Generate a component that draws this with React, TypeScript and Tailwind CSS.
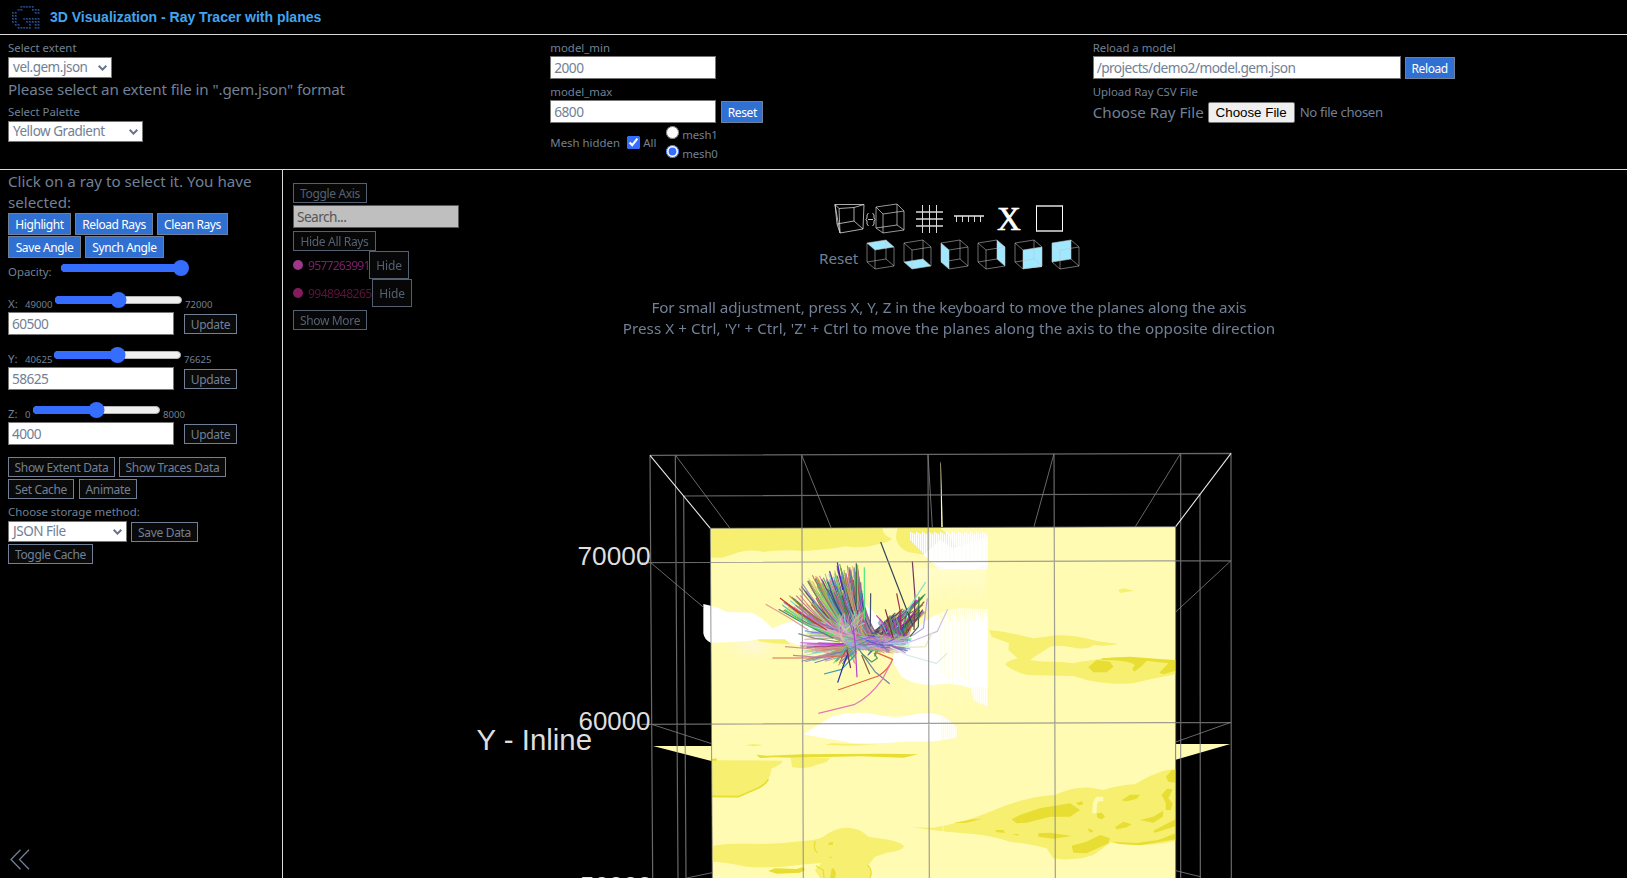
import React from "react";

const ff = "font-['Noto_Sans',sans-serif]";
const darkBtn =
  "box-border h-5 shrink-0 whitespace-nowrap border border-[#718096] bg-[#0a0a0a] text-center text-[12px] leading-[20px] tracking-[-0.33px] text-[#718096]";
const hideBtn =
  "box-border h-7 w-10 border border-[#718096] bg-[#0a0a0a] text-[12px] leading-[28px] tracking-[-0.1px] text-[#718096]";
const blueBtn =
  "box-border h-[22px] shrink-0 whitespace-nowrap border border-[#718096] bg-[#3070d3] text-center text-[12px] leading-[21px] tracking-[-0.4px] text-white";
const field =
  "box-border h-[23px] border border-[#767676] bg-white px-[3px] text-[13.7px] leading-[21px] tracking-[-0.56px] text-[#718096] outline-none";
const label = "block text-[11.4px] leading-4";

function Select({ value, className }: { value: string; className: string }) {
  return (
    <button type="button" className={`box-border flex h-[21px] items-center justify-between border border-[#767676] bg-white pl-1 pr-1 text-[13.5px] leading-[19px] tracking-[-0.48px] text-[#718096] ${className}`}>
      <span className="whitespace-nowrap">{value}</span>
      <svg width="9" height="6" viewBox="0 0 9 6" fill="none" stroke="#64748b" strokeWidth="2">
        <path d="M.7.8 4.5 4.6 8.3.8" />
      </svg>
    </button>
  );
}

const LOGO = [
  "...XXXXX..",
  "..XX...XXX",
  "XX......XX",
  "XX........",
  "XX..XXXXXX",
  "XX...XXXXX",
  ".XX...X.XX",
  "..XXXXX.XX",
];

function Logo() {
  return (
    <svg width="29" height="24" viewBox="0 0 29 24" className="shrink-0">
      {LOGO.map((row, y) =>
        row.split("").map((c, x) =>
          c === "X" ? (
            <g key={`${x}-${y}`}>
              <rect x={x * 2.85} y={y * 3} width="2" height="2" fill="#142f60" />
              <rect x={x * 2.85} y={y * 3} width="1" height="1" fill="#2d5592" />
            </g>
          ) : null,
        ),
      )}
    </svg>
  );
}

function Slider({ value, className }: { value: number; className: string }) {
  const left = 8 + (value / 100) * 113;
  return (
    <svg width="129" height="16" viewBox="0 0 129 16" className={`shrink-0 ${className}`}>
      <rect x="1.5" y="4.5" width="126" height="7" rx="3.5" fill="#efefef" stroke="#b2b2b2" />
      <rect x="1" y="4" width={left} height="8" rx="4" fill="#356dff" />
      <circle cx={left} cy="8" r="8" fill="#356dff" />
    </svg>
  );
}

function Axis(p: { name: string; min: string; max: string; value: string; minW: string }) {
  return (
    <div className="h-[55px]">
      <div className="flex h-[20px] items-start">
        <span className="w-[17px] text-[11.4px] leading-4">{p.name}:</span>
        <span className={`text-[9.6px] leading-[17px] ${p.minW}`}>{p.min}</span>
        <Slider value={50} className="-mt-1" />
        <span className="pl-[2px] text-[9.6px] leading-[17px]">{p.max}</span>
      </div>
      <div className="-mt-[4px] flex items-center">
        <input className={`${field} w-[166px]`} defaultValue={p.value} />
        <button className={`${darkBtn} ml-[10px] mt-px w-[53px]`}>Update</button>
      </div>
    </div>
  );
}

/* ---------- toolbar icons ---------- */

const FACES: Record<string, string> = {
  top: "M1 4 20 1 28 8 9 11Z",
  bottom: "M1 23 20 20 28 27 9 30Z",
  left: "M1 4 9 11 9 30 1 23Z",
  right: "M20 1 28 8 28 27 20 20Z",
  front: "M9 11 28 8 28 28 9 30Z",
  back: "M1 4 20 1 20 20 1 23Z",
};

function Cube({ face }: { face: string }) {
  return (
    <svg width="29" height="32" viewBox="0 0 29 32" fill="none" className="mr-2 shrink-0">
      <path d={FACES[face]} fill="#9fe8ff" />
      <path d="M1 4 20 1 28 8 9 11ZM1 4V23L9 30 28 27V8M9 11V30M20 1V20M1 23 20 20 28 27" stroke="#c4c4c4" strokeOpacity=".55" strokeWidth="1" />
    </svg>
  );
}

function Projection() {
  return (
    <svg width="72" height="32" viewBox="0 0 72 32" fill="none" stroke="#d5d5d5" strokeWidth="1">
      <path d="M1 1.500H30L29 26 6 30ZM1 1.500 5 5.500 20 4.500 30 1.500M5 5.500 6 30M20 4.500V18L29 26M20 18 3 21M1 1.500 3 21 6 30" strokeOpacity=".8" />
      <path d="M34.500 10 33 12V15L32 16.500 33 18V21L34.500 23M38.500 10 40 12V15L41 16.500 40 18V21L38.500 23M34 16.500H39" strokeOpacity=".9" />
      <path d="M42 4 63 1 70 8 49 11ZM42 4V25L49 30 70 27V8M49 11V30M63 1V22L42 25M63 22 70 27" strokeOpacity=".7" />
    </svg>
  );
}

/* ---------- scene ---------- */

function makeRandom(seed: number) {
  let s = seed;
  return () => {
    s = (s * 1664525 + 1013904223) % 4294967296;
    return s / 4294967296;
  };
}

type Ray = { d: string; c: string; o: number };

function buildRays(): Ray[] {
  const r = makeRandom(41);
  const out: Ray[] = [];
  const color = (lo: number, hi: number) =>
    `hsl(${Math.floor(r() * 360)} ${Math.floor(30 + r() * 50)}% ${Math.floor(lo + r() * (hi - lo))}%)`;
  const n = (v: number) => v.toFixed(0);
  const tips = [[120, 236], [130, 210], [160, 178], [198, 150], [216, 134], [245, 136], [270, 120], [293, 100], [316, 106], [334, 108], [352, 104]];
  for (let i = 0; i < 230; i++) {
    const t = Math.pow(r(), 0.9) * (tips.length - 1);
    const k = Math.min(tips.length - 2, Math.floor(t));
    const f = t - k;
    const shrink = Math.pow(r(), 1.2) * 0.42;
    const tx = tips[k][0] * (1 - f) + tips[k + 1][0] * f;
    const ty = tips[k][1] * (1 - f) + tips[k + 1][1] * f;
    const ex = 325 + (t / 10) * 72 + r() * 24 - 12;
    const ey = 335 - (t / 10) * 22 + r() * 20 - 10;
    const sx = tx + (ex - tx) * shrink;
    const sy = ty + (ey - ty) * shrink;
    const mx = sx * 0.4 + ex * 0.6 - 18;
    const my = sy * 0.34 + ey * 0.66 + 4;
    out.push({ d: `M${n(sx)} ${n(sy)}Q${n(mx)} ${n(my)} ${n(ex)} ${n(ey)}`, c: color(28, 68), o: 0.75 });
  }
  for (let i = 0; i < 110; i++) {
    const u = r();
    const sx = 430 + u * 128;
    const sy = 272 - u * 82 + r() * 60;
    out.push({ d: `M${n(sx)} ${n(sy)}L${n(sx - 25 - r() * 30)} ${n(sy + 28 + r() * 25)} ${n(400 + u * 85 + r() * 24)} ${n(300 + r() * 45)}`, c: color(24, 56), o: 0.75 });
  }
  for (let i = 0; i < 26; i++) {
    const sx = 410 + r() * 70;
    out.push({ d: `M${n(sx)} ${n(255 + r() * 40)}L${n(sx + 14 + r() * 16)} ${n(318 + r() * 16)}`, c: color(32, 66), o: 0.75 });
  }
  for (let i = 0; i < 120; i++) {
    const sx = 190 + r() * 185;
    const ex = 310 + r() * 85;
    out.push({ d: `M${n(sx)} ${n(235 + (370 - sx) * 0.25 + r() * 55)}Q${n(ex - 34)} ${n(302 + r() * 22)} ${n(ex)} ${n(322 + r() * 22)}`, c: color(58, 80), o: 0.65 });
  }
  for (let i = 0; i < 65; i++) {
    const sx = 180 + r() * 110;
    const sy = 335 + r() * 65;
    out.push({ d: `M${n(sx)} ${n(sy)}L${n(sx + 60)} ${n(sy * 0.65 + 121)} ${n(325 + r() * 40)} ${n(335 + r() * 20)}`, c: color(48, 78), o: 0.65 });
  }
  for (let i = 0; i < 170; i++) {
    const sx = 310 + r() * 90;
    const ex = 410 + r() * 105;
    out.push({ d: `M${n(sx)} ${n(312 + r() * 50)}L${n((sx + ex) / 2)} ${n(318 + r() * 42)} ${n(ex)} ${n(312 + r() * 58)}`, c: color(50, 76), o: 0.65 });
  }
  for (let i = 0; i < 22; i++) {
    const sx = 270 + r() * 80;
    out.push({ d: `M${n(sx)} ${n(375 + r() * 32)}L${n(315 + r() * 35)} ${n(350 + r() * 20)}`, c: color(40, 65), o: 0.7 });
  }
  return out;
}

const RAYS = buildRays();

const LONG_RAYS: [string, string][] = [
  ["M422 36 492 218 520 290", "#35485c"],
  ["M517 94 525 200 522 300", "#783854"],
  ["M373 112V270", "#4be87d"],
  ["M353 104V240", "#d4a53c"],
  ["M349 100V220", "#38773a"],
  ["M392 190 391 290", "#44526f"],
  ["M292 97 308 180", "#5221c9"],
  ["M77 223 150 265 205 300", "#dfa08d"],
  ["M120 204 180 250 260 300", "#cc3b24"],
  ["M116 238 190 280 280 325", "#38857c"],
  ["M136 240 200 285 280 315", "#54dd60"],
  ["M175 311 225 325 300 336", "#869080"],
  ["M97 384H210L320 377", "#d66e50"],
  ["M135 350 220 357 310 352", "#dc918e"],
  ["M159 376 225 381 300 375", "#cf7e9c"],
  ["M252 432 305 418 345 375", "#3d9dad"],
  ["M293 458 309 410 322 375", "#1b2fb0"],
  ["M351 442 346 350 340 290", "#b93dc9"],
  ["M332 414 320 360", "#62385a"],
  ["M389 432 365 375", "#856244"],
  ["M449 461 405 425 355 355", "#7085a3"],
  ["M294 480 415 438Q445 420 458 388L410 368", "#df6340"],
  ["M235 550 342 524Q390 500 427 448L456 394", "#e277ba"],
  ["M365 370 395 396 412 385 402 369", "#4d9a5f"],
  ["M623 238 592 304 510 336 430 342", "#cfbfe8"],
  ["M578 305 556 350 510 352 460 345", "#e9e8b5"],
  ["M621 370 589 400 500 375 450 350", "#d6e9e8"],
  ["M562 205 550 295 520 315 440 340", "#b9a4de"],
  ["M557 156 500 245", "#79ded0"],
  ["M470 190 480 240 482 300", "#a32e52"],
  ["M409 256 440 290 455 325", "#c13bbb"],
  ["M436 238 460 325", "#7a3040"],
  ["M537 200 535 290 510 320", "#3d6651"],
];

const L = "#fffbb3";
const M = "#f6ef6f";
const D = "#e7dd33";

const stripes = (x0: number, x1: number, step: number, top: (i: number) => number, bottom: (i: number) => number) => {
  let d = "";
  let i = 0;
  for (let x = x0; x < x1; x += step) {
    d += `M${x} ${top(i)}V${bottom(i)}`;
    i++;
  }
  return d;
};

function Scene() {
  return (
    <svg className="absolute inset-0 h-full w-full" viewBox="283 170 1344 708" fill="none">
      <defs>
        <linearGradient id="fade" x1="0" y1="0" x2="0" y2="1">
          <stop offset="0" stopColor="#fff" stopOpacity=".75" />
          <stop offset="1" stopColor="#fff" stopOpacity="0" />
        </linearGradient>
        <radialGradient id="glow">
          <stop offset="0" stopColor="#fff8d8" />
          <stop offset="1" stopColor="#fffbb3" stopOpacity="0" />
        </radialGradient>
      </defs>
      <g transform="translate(460 440) scale(.333333)">
        {/* section plane */}
        <path d="M751 265 2147 260V1314H757Z" fill={L} />
        <path d="M579 918H757V964ZM2147 912H2311L2147 959Z" fill={L} />
        <path d="M751 265H1267Q1270 288 1296 296 1285 307 1258 311 1210 327 1155 319L1125 325Q1050 332 1035 333 960 328 910 336 860 325 820 343L785 353H753Z" fill={M} />
        <path d="M1312 264H1440L1465 285 1490 320 1400 345 1343 336Q1308 318 1308 290Z" fill={M} />
        {/* low amplitude bodies */}
        <ellipse cx="880" cy="620" rx="110" ry="56" fill="url(#glow)" />
        <path d="M730 492Q770 500 800 516L875 518Q905 530 937 565 970 550 990 545L1060 535 1120 610 1010 615 975 600 895 598Q850 608 752 608 733 600 730 580Z" fill="#fff" />
        <path d="M895 598H975L990 612Q940 612 895 603Z" fill={M} />
        <path d="M1195 485Q1240 500 1265 550L1290 600H1200ZM1295 660 1320 600 1400 540Q1460 505 1500 505L1583 508V800L1540 780 1535 745Q1480 725 1420 735 1360 735 1325 710Z" fill="#fff" />
        <path d="M1030 883Q1080 850 1120 827 1180 812 1240 822 1300 838 1350 826 1420 810 1460 835L1490 860V893Q1420 908 1330 905 1250 912 1180 909 1090 895 1030 883Z" fill="#fff" />
        <path d="M1440 300 1480 325 1583 290V375L1540 389 1460 386 1415 365 1390 345Z" fill="#fff" />
        <path d={stripes(1352, 1584, 6, (i) => 276 + (i % 3) * 3, (i) => Math.min(388, 302 + i * 6))} stroke="#fff" strokeWidth="3.800" />
        <path d={stripes(1397, 1584, 12, (i) => 280 + (i % 3) * 4, (i) => 345 + (i % 4) * 9)} stroke={L} strokeWidth="1.600" strokeOpacity=".7" />
        <rect x="1350" y="385" width="228" height="118" fill="url(#fade)" opacity=".35" />
        <path d={stripes(1360, 1584, 6, () => 385, (i) => 430 + (i % 5) * 16)} stroke="#fff" strokeWidth="1.500" strokeOpacity=".38" />
        <path d={stripes(1430, 1584, 6, (i) => 500 + (i % 3) * 3, (i) => 520 + (i % 4) * 8)} stroke={L} strokeWidth="2" strokeOpacity=".9" />
        <path d={stripes(1442, 1530, 12, () => 515, (i) => 700 + (i % 4) * 10)} stroke={L} strokeWidth="1.500" strokeOpacity=".75" />
        <path d={stripes(1535, 1584, 6, () => 742, (i) => 775 + i * 4)} stroke={L} strokeWidth="2" />
        <path d={stripes(1330, 1580, 6, () => 735, (i) => 768 + (i % 5) * 12)} stroke="#fff" strokeWidth="2" strokeOpacity=".4" />
        <path d={stripes(1445, 1496, 6, () => 820, () => 908)} stroke={L} strokeWidth="2" />
        {/* middle strata */}
        <path d="M1587 570Q1640 575 1700 590L1720 595 1790 586Q1850 585 1910 603L1975 612Q1940 620 1900 615 1890 628 1850 625 1780 605 1710 660 1750 668 1860 665L1970 651 2147 660V703Q2080 715 2020 730 1950 735 1880 720L1840 708 1700 705Q1650 690 1635 672 1650 660 1673 655L1645 630 1647 610 1595 590Z" fill={M} />
        <path d="M1715 658 1770 620Q1810 612 1850 628L1905 625Q1925 645 1900 655L1840 670Q1780 662 1715 658Z" fill={L} />
        <path d="M1885 682 1910 660 1950 665 1960 680 1940 697H1900ZM1925 655 2010 650 2147 661V692L2110 703 2098 698 2125 670 2060 662Q2045 680 2025 694 2010 690 2025 676 2010 660 1925 660Z" fill={D} />
        <path d="M1975 449 1990 445 2022 452 1980 459Z" fill={M} />
        <path d="M857 916 880 912 910 916 880 919ZM1095 915 1115 910 1250 914 1170 917Z" fill={M} />
        <path d="M889 944 920 947 1030 943 1270 941 1375 943 1330 953 1200 949 1000 953 940 952 900 954Z" fill={D} />
        <path d="M992 955 1110 953 1100 966 1070 974Q1040 988 997 982Z" fill={M} />
        <path d="M757 961 968 962Q965 975 935 985 930 1030 890 1048L835 1072H757Z" fill={M} />
        <path d="M925 1018Q915 1036 890 1046L835 1070 757 1069" stroke={D} strokeWidth="5" />
        <path d="M755 957 770 955V962H755Z" fill={D} />
        <path d="M757 1218Q820 1208 900 1212 980 1210 1060 1200 1080 1195 1090 1190 1130 1160 1170 1164 1205 1168 1225 1190L1290 1200Q1330 1210 1332 1220 1325 1232 1280 1238L1245 1250 1225 1275Q1240 1300 1230 1314H1080L1065 1290 1085 1268Q1060 1270 1015 1275 950 1285 860 1280 800 1266 757 1265Z" fill={M} />
        <path d="M925 1293 945 1285 1010 1287 1030 1281 1035 1290 1020 1298 950 1301ZM1105 1209 1118 1206 1119 1214 1107 1215ZM1105 1250H1115L1114 1255ZM1115 1288 1120 1284 1128 1298 1125 1314H1110Z" fill={D} />
        <path d="M1066 1203Q1058 1230 1073 1238M1068 1278 1090 1290 1092 1314M1222 1275Q1240 1290 1230 1314" stroke={D} strokeWidth="3.500" />
        <path d="M1354 1162 1420 1163Q1520 1145 1590 1115 1700 1068 1785 1065 1840 1040 1890 1043L1930 1050Q1980 1035 2025 1033 2075 1002 2120 990L2147 988V1202Q2090 1215 2040 1215 1980 1215 1955 1205L1900 1245 1865 1255Q1810 1262 1780 1255L1760 1225Q1700 1210 1650 1205 1600 1188 1540 1182L1460 1175Z" fill={M} />
        <path d="M1480 1149 1540 1138 1565 1136 1520 1148ZM1655 1138 1680 1125 1740 1105 1830 1090 1860 1110 1830 1130 1770 1130 1700 1148 1670 1150ZM1735 1180 1770 1178 1835 1188 1780 1196 1735 1190ZM1835 1217 1880 1205 1920 1185 1950 1195 1945 1210 1880 1240 1840 1238ZM1605 1170 1630 1170 1635 1179 1610 1176ZM1655 1182H1675V1187ZM1885 1165 1900 1172 1895 1178 1885 1172ZM1848 1088 1868 1084V1094L1855 1096ZM1910 1120 1925 1118 1935 1130 1925 1138 1912 1133ZM1965 1162 1990 1145 2015 1153 2000 1162 1970 1168ZM1985 1081 2010 1064 2040 1064 2030 1076 2000 1084ZM2040 1140 2080 1130 2110 1112 2108 1130 2080 1148ZM2105 1065 2120 1047 2138 1048 2125 1075 2138 1090 2133 1110 2118 1110 2117 1088ZM2118 1010 2135 990 2147 990V1028L2125 1025ZM1950 1205 2030 1209 2095 1200 2147 1180V1198L2040 1216 1980 1212ZM2080 1172 2147 1138V1158L2085 1178Z" fill={D} />
        <path d="M1903 1120 1905 1090 1912 1077 1930 1077" stroke={L} strokeWidth="13" />
        <path d="M1449 1155V1225" stroke={L} strokeWidth="3" />
      </g>
      <path d="M940.400 461 941.200 527H942.800L941 464Z" fill={L} />

      {/* ray bundle */}
      <g transform="translate(740 530) scale(.333333)" strokeWidth="3.300" strokeLinejoin="round">
        {RAYS.map((ray, i) => (
          <path key={i} d={ray.d} stroke={ray.c} strokeOpacity={ray.o} />
        ))}
        {LONG_RAYS.map(([d, c]) => (
          <path key={d} d={d} stroke={c} strokeWidth="3.600" />
        ))}
      </g>

      {/* bounding cage */}
      <g transform="translate(460 440) scale(.333333)" stroke="#858585" strokeOpacity=".78" strokeWidth="3.600">
        <path d="M570 46 2313 40 2314 1314M570 46 578 1314M646 45 654 1314M671 168 678 1314M1025 45 1030 1314M1404 42 1408 1314M1782 41 1786 1314M2162 40V1314M2220 162 2221 1314M671 168 2220 162M545 368 2313 362M545 853 2313 847" />
        <path d="M646 45 810 265M1025 45 1114 265M1404 42 1417 262M1782 41 1722 260M2162 40 2026 260M572 368 732 503M2313 362 2147 516M575 853 755 911M2313 847 2147 906M680 1314 757 1298M2147 1292 2221 1310" strokeWidth="3" />
        <path d="M570 46 751 265M2313 40 2147 260" stroke="#fff" strokeOpacity=".9" strokeWidth="3.300" />
        <path d="M751 265 757 1314M751 265 2147 260V1314" strokeWidth="3" stroke="#777" />
      </g>
      <g fill="#dedede" fontFamily="'Liberation Sans', sans-serif">
        <text x="577.500" y="564.500" fontSize="25.500" textLength="73" lengthAdjust="spacingAndGlyphs">70000</text>
        <text x="578.500" y="730" fontSize="25.500" textLength="72" lengthAdjust="spacingAndGlyphs">60000</text>
        <text x="580" y="895" fontSize="25.500" textLength="72" lengthAdjust="spacingAndGlyphs">50000</text>
        <text x="476.500" y="750" fontSize="28.800" textLength="115.500" lengthAdjust="spacingAndGlyphs">Y - Inline</text>
      </g>
    </svg>
  );
}

export default function App() {
  return (
    <div className={`flex h-[878px] w-[1627px] flex-col overflow-hidden bg-black text-[#718096] ${ff}`}>
      <header className="box-border flex h-[35px] shrink-0 items-start border-b border-[#d9d9d9] pl-3 pt-[6px]">
        <Logo />
        <h1 className="ml-[9px] mt-[1px] whitespace-nowrap font-['Liberation_Sans',sans-serif] text-[14px] font-bold leading-5 text-[#42a5f0]">
          3D Visualization - Ray Tracer with planes
        </h1>
      </header>

      <section className="box-border grid h-[135px] shrink-0 grid-cols-3 border-b border-[#d9d9d9] pt-[5px]">
        <div className="pl-2">
          <span className={label}>Select extent</span>
          <Select value="vel.gem.json" className="mt-px w-[104px]" />
          <p className="whitespace-nowrap text-[15.2px] leading-[23px] tracking-[-0.14px]">Please select an extent file in ".gem.json" format</p>
          <span className={`${label} mt-[3px]`}>Select Palette</span>
          <Select value="Yellow Gradient" className="mt-px w-[135px]" />
        </div>
        <div className="pl-2">
          <span className={label}>model_min</span>
          <input className={`${field} block w-[166px]`} defaultValue="2000" />
          <span className={`${label} mt-[5px]`}>model_max</span>
          <div className="flex items-center">
            <input className={`${field} w-[166px]`} defaultValue="6800" />
            <button className={`${blueBtn} ml-[5px] mt-px w-[42px]`}>Reset</button>
          </div>
          <div className="flex pt-[3px] text-[11.4px]">
            <span className="mt-[9px] w-[77px] leading-4">Mesh hidden</span>
            <input type="checkbox" defaultChecked className="m-0 mt-[10px] h-[13px] w-[13px] accent-[#356dff]" />
            <span className="ml-[3px] mt-[9px] w-[23px] leading-4">All</span>
            <div className="flex flex-col">
              <label className="flex h-[19px] items-start leading-4">
                <input type="radio" name="mesh" className="m-0 mr-[3px] h-[13px] w-[13px]" />
                <span className="mt-px tracking-[-0.15px]">mesh1</span>
              </label>
              <label className="flex h-[19px] items-start leading-4">
                <input type="radio" name="mesh" defaultChecked className="m-0 mr-[3px] h-[13px] w-[13px] accent-[#356dff]" />
                <span className="mt-px tracking-[-0.15px]">mesh0</span>
              </label>
            </div>
          </div>
        </div>
        <div className="pl-2">
          <span className={label}>Reload a model</span>
          <div className="flex items-center">
            <input className={`${field} w-[308px]`} defaultValue="/projects/demo2/model.gem.json" />
            <button className={`${blueBtn} ml-1 mt-px w-[50px]`}>Reload</button>
          </div>
          <span className={`${label} mt-[5px]`}>Upload Ray CSV File</span>
          <div className="flex items-center pt-[2px]">
            <span className="w-[115px] whitespace-nowrap text-[15.2px] leading-[21px]">Choose Ray File</span>
            <button className="box-border h-[21px] w-[87px] rounded-[2px] border border-[#767676] bg-[#efefef] font-['Liberation_Sans',sans-serif] text-[13.333px] leading-[19px] text-black">
              Choose File
            </button>
            <span className="ml-[5px] text-[13.2px] leading-[21px] tracking-[-0.35px]">No file chosen</span>
          </div>
        </div>
      </section>

      <main className="flex min-h-0 flex-1">
        <aside className="box-border flex w-[283px] shrink-0 flex-col border-r border-[#d9d9d9] pl-2">
          <p className="pt-px text-[15.2px] leading-[21px]">
            Click on a ray to select it. You have
            <br />
            selected:
          </p>
          <div className="flex gap-1">
            <button className={`${blueBtn} w-[63px]`}>Highlight</button>
            <button className={`${blueBtn} w-[78px]`}>Reload Rays</button>
            <button className={`${blueBtn} w-[71px]`}>Clean Rays</button>
          </div>
          <div className="mt-px flex gap-1">
            <button className={`${blueBtn} w-[73px]`}>Save Angle</button>
            <button className={`${blueBtn} w-[79px]`}>Synch Angle</button>
          </div>
          <div className="mt-[2px] flex h-[36px]">
            <span className="mt-[4px] w-[52px] text-[11.4px] leading-4">Opacity:</span>
            <Slider value={100} className="" />
          </div>
          <Axis name="X" min="49000" max="72000" value="60500" minW="w-[29px]" />
          <Axis name="Y" min="40625" max="76625" value="58625" minW="w-[28px]" />
          <Axis name="Z" min="0" max="8000" value="4000" minW="w-[7px]" />
          <div className="-mt-[4px] flex gap-1">
            <button className={`${darkBtn} w-[107px]`}>Show Extent Data</button>
            <button className={`${darkBtn} w-[107px]`}>Show Traces Data</button>
          </div>
          <div className="mt-[2px] flex gap-[5px]">
            <button className={`${darkBtn} w-[66px]`}>Set Cache</button>
            <button className={`${darkBtn} w-[58px]`}>Animate</button>
          </div>
          <span className={`${label} mt-[5px]`}>Choose storage method:</span>
          <div className="mt-px flex items-end gap-1">
            <Select value="JSON File" className="w-[119px]" />
            <button className={`${darkBtn} w-[67px]`}>Save Data</button>
          </div>
          <button className={`${darkBtn} mt-[2px] w-[85px]`}>Toggle Cache</button>
          <svg width="20" height="21" viewBox="0 0 20 21" className="mb-[8px] ml-[2px] mt-auto" fill="none" stroke="#718096" strokeWidth="1.300">
            <path d="M10.500.800 1 10.500 10.500 20.200M19 .800 9.500 10.500 19 20.200" />
          </svg>
        </aside>

        <div className="relative flex-1 overflow-hidden">
          <Scene />
          <div className="absolute left-[10px] top-[13px] flex flex-col items-start opacity-75">
            <button className={`${darkBtn} w-[74px]`}>Toggle Axis</button>
            <input className={`${field} mt-[2px] w-[166px] placeholder:text-[#757575]`} placeholder="Search..." />
            <button className={`${darkBtn} mt-[3px] w-[83px]`}>Hide All Rays</button>
            <div className="flex h-7 items-center text-[12.2px] text-[#9b2c86]">
              <span className="h-[10px] w-[10px] rounded-full bg-[#d04ab8]" />
              <span className="ml-[5px] mt-[2px] w-[61px] tracking-[-0.8px]">9577263991</span>
              <button className={hideBtn}>Hide</button>
            </div>
            <div className="flex h-7 items-center text-[12.2px] text-[#7a1a50]">
              <span className="h-[10px] w-[10px] rounded-full bg-[#b0257b]" />
              <span className="ml-[5px] mt-[2px] w-[64px] tracking-[-0.6px]">9948948265</span>
              <button className={hideBtn}>Hide</button>
            </div>
            <button className={`${darkBtn} mt-[3px] w-[74px]`}>Show More</button>
          </div>

          <div className="absolute left-[536px] top-[33px] flex flex-col">
            <div className="flex h-[36px] items-start pl-[15px]">
              <Projection />
              <svg width="27" height="28" viewBox="0 0 27 28" className="ml-[10px] mt-[2px]" stroke="#d8d8d8" fill="none">
                <path d="M6.500 0V28M13.500 0V28M20.500 0V28" />
                <path d="M0 7H27M0 14H27M0 21H27" strokeWidth="2" strokeOpacity=".75" />
              </svg>
              <svg width="30" height="8" viewBox="0 0 30 8" className="ml-[11px] mt-[12px]" stroke="#d8d8d8" fill="none">
                <path d="M0 1H30" strokeWidth="2" strokeOpacity=".8" />
                <path d="M2.500 1V7M8.500 1V7M14.500 1V7M20.500 1V7M26.500 1V7" />
              </svg>
              <span className="ml-[13px] w-[23px] text-center font-['Liberation_Serif',serif] text-[33px] leading-[32px] text-white [-webkit-text-stroke:0.6px_white]">X</span>
              <span className="ml-[16px] mt-[2px] box-border h-[27px] w-[27px] border-x border-y-2 border-x-white border-y-[#a8a8a8]" />
            </div>
            <div className="flex h-[32px] items-start">
              <span className="mt-[8px] w-[47px] text-[15.2px] leading-[22px]">Reset</span>
              {["top", "bottom", "left", "right", "front", "back"].map((f) => (
                <Cube key={f} face={f} />
              ))}
            </div>
          </div>

          <div className="absolute left-0 top-[127px] w-[1332px] text-center text-[15.2px] leading-[21px]">
            <p className="tracking-[-0.07px]">For small adjustment, press X, Y, Z in the keyboard to move the planes along the axis</p>
            <p className="tracking-[0.06px]">Press X + Ctrl, 'Y' + Ctrl, 'Z' + Ctrl to move the planes along the axis to the opposite direction</p>
          </div>
        </div>
      </main>
    </div>
  );
}
